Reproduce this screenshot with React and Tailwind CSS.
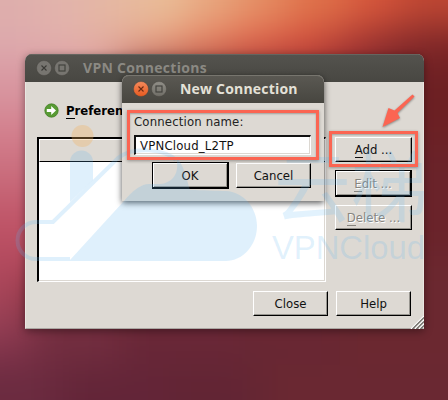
const font = "font-['DejaVu_Sans_Condensed','DejaVu_Sans',sans-serif]";

// Wallpaper colour field: [x, y, width, height, colour], softened by a blur.
const wallpaper = [
  [-80, -80, 120, 110, '#deaeac'],
  [40, -80, 50, 110, '#e2b4ab'],
  [90, -80, 50, 110, '#e5b8a2'],
  [140, -80, 50, 110, '#eabd97'],
  [190, -80, 50, 110, '#e8a57d'],
  [240, -80, 50, 110, '#e58c62'],
  [290, -80, 60, 110, '#df7049'],
  [350, -80, 50, 110, '#d5553b'],
  [400, -80, 130, 106, '#bf4733'],
  [-80, 30, 120, 35, '#dda9ad'],
  [40, 30, 50, 35, '#e2aeab'],
  [90, 30, 40, 35, '#e3ab9d'],
  [130, 30, 50, 35, '#e59a80'],
  [180, 30, 50, 35, '#e27a5d'],
  [230, 30, 50, 35, '#dc5c46'],
  [280, 30, 50, 35, '#cf483a'],
  [330, 30, 40, 35, '#a83431'],
  [370, 30, 50, 35, '#86292a'],
  [420, 30, 110, 35, '#7a2426'],
  [-80, 65, 200, 50, '#d8959f'],
  [-80, 115, 200, 45, '#d27d8b'],
  [-80, 160, 200, 40, '#c86a7a'],
  [-80, 200, 200, 40, '#c05568'],
  [-80, 240, 200, 35, '#b54b5f'],
  [-80, 275, 110, 35, '#a84559'],
  [-80, 310, 110, 28, '#964055'],
  [-80, 338, 110, 27, '#83344c'],
  [-80, 365, 140, 120, '#6b2b40'],
  [30, 310, 90, 55, '#732e40'],
  [120, 310, 120, 55, '#692737'],
  [60, 365, 110, 120, '#632538'],
  [170, 365, 90, 120, '#622534'],
  [240, 310, 100, 60, '#682733'],
  [260, 365, 290, 120, '#6a2832'],
  [340, 250, 190, 115, '#6b2830'],
  [400, 65, 130, 80, '#6c2023'],
  [400, 145, 130, 110, '#6a232a'],
];

function Wallpaper() {
  return (
    <svg className="absolute inset-0" width="448" height="400">
      <defs>
        <filter id="soften" filterUnits="userSpaceOnUse" x="-80" y="-80" width="610" height="560" colorInterpolationFilters="sRGB">
          <feGaussianBlur stdDeviation="19" />
        </filter>
      </defs>
      <g filter="url(#soften)">
        <rect x="-80" y="-80" width="610" height="560" fill="#7a2a35" />
        {wallpaper.map(([x, y, w, h, c], i) => (
          <rect key={i} x={x} y={y} width={w} height={h} fill={c} stroke={c} />
        ))}
      </g>
    </svg>
  );
}

function TitleButton({ kind, active }) {
  return (
    <svg className="shrink-0" width="16" height="16" viewBox="0 0 16 16">
      <defs>
        <linearGradient id="orange" x2="0" y2="1">
          <stop stopColor="#f58a5c" />
          <stop offset="1" stopColor="#e65a20" />
        </linearGradient>
        <linearGradient id="grey" x2="0" y2="1">
          <stop stopColor="#918f88" />
          <stop offset="1" stopColor="#6f6d66" />
        </linearGradient>
      </defs>
      <circle cx="8" cy="8" r="7.5" fill={active ? (kind === 'close' ? 'url(#orange)' : 'url(#grey)') : '#777570'} stroke="#43423d" strokeWidth=".4" />
      {kind === 'close' ? (
        <path d="M5.500 5.500l5 5M10.500 5.500l-5 5" stroke={active ? '#6b2b14' : '#3b3a36'} strokeWidth="1.100" />
      ) : (
        <rect x="5" y="5" width="6" height="6" fill="none" stroke="#3f3e3a" strokeWidth="1.100" />
      )}
    </svg>
  );
}

function Button({ children, focus, disabled, className }) {
  return (
    <div
      className={`box-border flex shrink-0 items-center justify-center whitespace-pre text-[13px] leading-none ${
        focus
          ? 'border border-r-2 border-b-2 border-black shadow-[inset_1px_1px_0_#fff,inset_-1px_-1px_0_#999790]'
          : 'border border-t-white border-l-white border-r-black border-b-black shadow-[inset_-1px_-1px_0_#97958f]'
      } ${disabled ? 'text-[#87857f] [text-shadow:1px_1px_0_#fff]' : 'text-[#111]'} bg-[#ddd9d3] ${className}`}
    >
      {children}
    </div>
  );
}

function Mnemonic({ children }) {
  return <span className="border-b border-current">{children}</span>;
}

function Watermark() {
  return (
    <svg className="absolute inset-0" width="448" height="400">
      <circle cx="82.5" cy="136" r="11" fill="#f3b15e" fillOpacity=".32" />
      <g fill="#60b5f2" fillOpacity=".2">
        <path d="M70 202V162a11.500 11.500 0 0 1 23 0V180Z" />
        <path d="M70 260L124 201Q138 184 149 184H160C174 183 180 171 176 158C184 164 186 178 190 190C203 190 216 191 226 191C243 192 257 207 257 226C257 246 242 261 226 261H70Z" />
      </g>
      <path d="M70 259H36A18.500 18.500 0 0 1 36 222H53L118 158C134 145 166 150 176 160" fill="none" stroke="#60b5f2" strokeOpacity=".2" strokeWidth="4" />
      <text x="274" y="216" fontSize="77" textLength="154" lengthAdjust="spacingAndGlyphs" fill="#60b5f2" fillOpacity=".18" className="font-['Noto_Sans_CJK_SC',sans-serif]">云梯</text>
      <text x="272" y="258.500" fontSize="33.500" textLength="153" lengthAdjust="spacingAndGlyphs" fill="#60b5f2" fillOpacity=".2" className="font-['Liberation_Sans',sans-serif]">VPNCloud</text>
    </svg>
  );
}

function Annotations() {
  return (
    <>
      <div className="absolute top-[110px] left-[127px] h-[50px] w-[192px] border-3 border-[#fb6552] shadow-[0_1px_3px_#0005,inset_0_1px_2px_#0004]" />
      <div className="absolute top-[131px] left-[329px] h-[36px] w-[89px] border-3 border-[#fb6552] shadow-[0_1px_3px_#0005,inset_0_1px_2px_#0004]" />
      <svg className="absolute top-[90px] left-[378px] drop-shadow-[0_1px_1px_#0006]" width="40" height="42">
        <path d="M34.500 4.500L36.500 6.500L19.500 23L22 28L4.500 37L10.500 18L16.500 20.500Z" fill="#fb6552" />
      </svg>
    </>
  );
}

function MainWindow() {
  return (
    <div className="absolute top-[54px] left-[25px] flex h-[275px] w-[399px] flex-col overflow-hidden rounded-t-[7px] bg-[#ddd9d3] shadow-[0_2px_9px_#0006]">
      <div className="flex h-7 shrink-0 items-center gap-0.5 bg-linear-to-b from-[#54534e] to-[#484742] pl-[11px] shadow-[inset_0_1px_0_#666560]">
        <TitleButton kind="close" />
        <TitleButton kind="max" />
        <span className="ml-[11px] font-['Open_Sans',sans-serif] text-[14px] leading-none font-bold tracking-[0.3px] whitespace-nowrap text-[#8b8983]">VPN Connections</span>
      </div>
      <div className="flex flex-1 flex-col border-x border-b border-x-[#e9e6e1] border-b-[#aaa7a2] pr-[11px] pl-[11px]">
        <div className="mt-[20px] flex h-4 items-center gap-[7px] pl-[7px]">
          <svg width="15" height="15" viewBox="0 0 15 15">
            <circle cx="7.500" cy="7.500" r="6.700" fill="#589b34" stroke="#3e7b21" strokeWidth=".7" />
            <path d="M2.800 6H7.200V3L12 7.500L7.200 12V9H2.800Z" fill="#fff" />
          </svg>
          <span className="text-[13px] leading-none font-bold text-black"><Mnemonic>P</Mnemonic>references</span>
        </div>
        <div className="mt-[19px] flex h-[145px]">
          <div className="flex w-[289px] flex-col border-t-2 border-r border-b border-l-2 border-t-black border-r-white border-b-white border-l-black bg-white shadow-[inset_-1px_-1px_0_#dcd8d2]">
            <div className="h-[23px] border-t border-b border-l border-t-white border-b-black border-l-white bg-[#ddd9d3]" />
          </div>
          <div className="ml-[9px] flex flex-col">
            <Button className="h-[25px] w-[77px]"><span><Mnemonic>A</Mnemonic>dd ...</span></Button>
            <Button focus disabled className="mt-[8px] h-[27px] w-[77px]"><span><Mnemonic>E</Mnemonic>dit ...</span></Button>
            <Button disabled className="mt-[8px] h-[25px] w-[77px]"><span><Mnemonic>D</Mnemonic>elete ...</span></Button>
          </div>
        </div>
        <div className="mt-[9px] flex justify-end gap-2 pr-px">
          <Button className="h-[25px] w-[75px]">Close</Button>
          <Button className="h-[25px] w-[75px]">Help</Button>
        </div>
      </div>
      <svg className="absolute right-0 bottom-0" width="14" height="13">
        <path d="M1 13L14 0M5 13L14 4M9 13L14 8" stroke="#fff" strokeWidth="1.200" />
        <path d="M2.500 13L14 1.500M6.500 13L14 5.500M10.500 13L14 9.500" stroke="#716f6a" strokeWidth="1.300" />
      </svg>
    </div>
  );
}

function Dialog() {
  return (
    <div className="absolute top-[75px] left-[122px] flex h-[126px] w-[202px] flex-col rounded-t-[7px] bg-[#ddd9d3] shadow-[0_2px_6px_#000a]">
      <div className="flex h-7 shrink-0 items-center gap-0.5 rounded-t-[7px] bg-linear-to-b from-[#5b5953] to-[#474640] pl-[11px] shadow-[inset_0_1px_0_#77756e]">
        <TitleButton kind="close" active />
        <TitleButton kind="max" active />
        <span className="ml-[11px] font-['Open_Sans',sans-serif] text-[14px] leading-none font-bold tracking-[0.2px] whitespace-nowrap text-[#e4e1d8]">New Connection</span>
      </div>
      <div className="flex flex-1 flex-col pr-[13px] pl-3">
        <span className="mt-[12px] text-[13px] leading-[14px] tracking-[0.16px] whitespace-nowrap text-[#222]">Connection name:</span>
        <div className="mt-[6px] flex h-5 items-center border-t-2 border-r border-b border-l-2 border-t-[#111] border-r-white border-b-white border-l-[#111] bg-white pl-1 text-[13px] leading-none tracking-[0.2px] text-[#111] shadow-[inset_-1px_-1px_0_#dcd8d2]">
          VPNCloud_L2TP
        </div>
        <div className="mt-[7px] flex items-center justify-end gap-[7px]">
          <Button focus className="h-[27px] w-[77px]">OK</Button>
          <Button className="h-[25px] w-[75px]">Cancel</Button>
        </div>
      </div>
    </div>
  );
}

export default function App() {
  return (
    <div className={`relative h-[400px] w-[448px] overflow-hidden bg-[#7a2a35] ${font}`}>
      <Wallpaper />
      <MainWindow />
      <Dialog />
      <Watermark />
      <Annotations />
    </div>
  );
}
